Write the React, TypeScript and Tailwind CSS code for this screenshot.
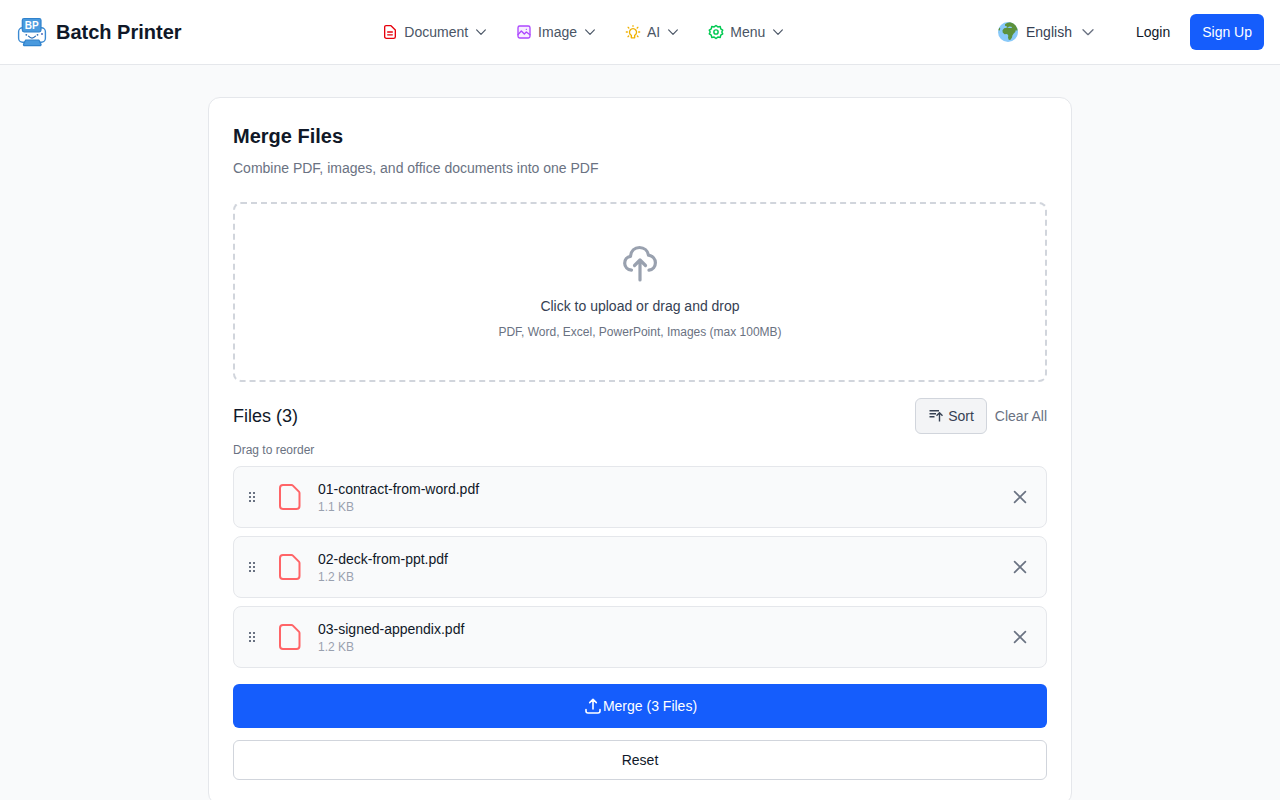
import type { ReactNode } from "react";

const files = [
  { name: "01-contract-from-word.pdf", size: "1.1 KB" },
  { name: "02-deck-from-ppt.pdf", size: "1.2 KB" },
  { name: "03-signed-appendix.pdf", size: "1.2 KB" },
];

function Logo() {
  return (
    <svg viewBox="0 0 32 32" className="size-8" aria-hidden="true">
      <rect x="2.6" y="11.8" width="26.8" height="14.400" rx="4" fill="#fff" stroke="#3b8ad2" strokeWidth="1.400" />
      <rect x="6.300" y="2.500" width="18.700" height="13.300" rx="1.800" fill="#4a9ade" stroke="#2f82cc" strokeWidth="1.200" />
      <text x="15.700" y="12.600" textAnchor="middle" fontSize="10" fontWeight="700" fill="#fff">
        BP
      </text>
      <path d="M12.500 20.200q3.500 3.800 7 0" fill="none" stroke="#2f6fb5" strokeWidth="1.200" strokeLinecap="round" />
      <circle cx="10.300" cy="18.800" r="0.900" fill="#2f6fb5" />
      <circle cx="21.500" cy="18.800" r="0.900" fill="#2f6fb5" />
      <circle cx="26" cy="18" r="0.900" fill="#3f5fb5" />
      <path d="M9.500 24.200h13.500l2 4q.3 1.400-1.200 1.400H8.700q-1.500 0-1.200-1.400z" fill="#4a9ade" stroke="#2f82cc" strokeWidth="1.200" strokeLinejoin="round" />
    </svg>
  );
}

function Stroke({ className, width = 2, children }: { className: string; width?: number; children: ReactNode }) {
  return (
    <svg
      viewBox="0 0 24 24"
      fill="none"
      stroke="currentColor"
      strokeWidth={width}
      strokeLinecap="round"
      strokeLinejoin="round"
      className={className}
      aria-hidden="true"
    >
      {children}
    </svg>
  );
}

function Chevron({ className }: { className: string }) {
  return (
    <Stroke className={className} width={2}>
      <path d="M4.500 8.500l7.500 7.500 7.500-7.500" />
    </Stroke>
  );
}

function Globe() {
  return (
    <svg viewBox="0 0 20 20" className="size-5" aria-hidden="true">
      <circle cx="10" cy="10" r="10" fill="#88c9f9" />
      <path
        d="M7 2.200l2-1.200 3-.800 3.400 1.200 2.400 2.300 1.600 3.200-.2 2.200-1.300-1.200-.7 2-1.500 1.700-1.300 1.900-.4 2.100-1.500 2.200-1.600.3-.9-2.300.3-2.200-1.200-1.500-2.600.2-1.800-1.800-.2-2.300 1.600-2 2.600-.400.300-1.300-2-.800z"
        fill="#5c913b"
      />
      <path d="M9 5.300l2 .800 2.600-.200.400-.900-2.200-.400-1.600.3z" fill="#88c9f9" />
      <path d="M.3 8.200l1-2.500.9.400-.400 2.300z" fill="#5c913b" />
    </svg>
  );
}

const menus = [
  {
    label: "Document",
    icon: (
      <Stroke className="size-4 text-red-600">
        <path d="M6 2.500h7.500l6.500 6.500V19a2.500 2.500 0 0 1-2.500 2.500H6.500A2.500 2.500 0 0 1 4 19V4.500a2 2 0 0 1 2-2z" />
        <path d="M8.500 12h7M8.500 16.200h7" />
      </Stroke>
    ),
  },
  {
    label: "Image",
    icon: (
      <Stroke className="size-4 text-purple-500">
        <rect x="3" y="3" width="18" height="18" rx="2.500" fill="currentColor" fillOpacity="0.100" />
        <path d="M3 16l5-5.500 4.500 4.500 3-3 5.500 4M15.500 8h.01" />
      </Stroke>
    ),
  },
  {
    label: "AI",
    icon: (
      <Stroke className="size-4 text-yellow-500">
        <path d="M9.500 17v3.800h5V17a5.300 5.300 0 1 0-5 0z" />
        <path d="M12 2.500v1M2 12h1.500M20.500 12H22M4.700 5l1 1M19.300 5l-1 1M5.500 18l-1 1M18.500 18l1 1" />
      </Stroke>
    ),
  },
  {
    label: "Menu",
    icon: (
      <Stroke className="size-4 text-green-500" width={2.2}>
        <path d="M12 2.200l2.800 2.200 3.600-.6.700 3.500 3 2L20.700 12l1.400 2.700-3 2-.7 3.500-3.600-.6L12 21.800l-2.800-2.200-3.600.6-.7-3.500-3-2L3.300 12 1.900 9.300l3-2 .7-3.500 3.600.6z" />
        <circle cx="12" cy="12" r="3.200" />
      </Stroke>
    ),
  },
];

function Header() {
  return (
    <header className="flex h-[65px] items-center justify-between border-b border-gray-200 bg-white px-4">
      <a href="#" className="flex items-center gap-2 text-xl font-bold text-gray-900">
        <Logo />
        Batch Printer
      </a>

      <nav className="flex items-center gap-1">
        {menus.map((menu) => (
          <button key={menu.label} type="button" className="flex items-center gap-1.5 px-3 py-2 text-gray-600">
            {menu.icon}
            {menu.label}
            <Chevron className="size-3.5" />
          </button>
        ))}
      </nav>

      <div className="flex items-center gap-4">
        <button type="button" className="flex items-center gap-2 px-3 py-2 text-gray-700">
          <Globe />
          English
          <Chevron className="size-4 text-gray-500" />
        </button>
        <div className="flex items-center gap-2">
          <a href="#login" className="px-3 py-2 text-gray-900">
            Login
          </a>
          <a href="#signup" className="rounded-md bg-blue-600 px-3 py-2 text-white">
            Sign Up
          </a>
        </div>
      </div>
    </header>
  );
}

function FileRow({ name, size }: { name: string; size: string }) {
  return (
    <li className="flex items-center rounded-lg border border-gray-200 bg-gray-50 p-3">
      <svg viewBox="0 0 12 16" className="mr-3 h-4 w-3 shrink-0 fill-gray-500" aria-hidden="true">
        {[4, 8, 12].map((y) => (
          <g key={y}>
            <rect x="3" y={y - 1} width="2" height="2" />
            <rect x="7" y={y - 1} width="2" height="2" />
          </g>
        ))}
      </svg>
      <div className="mr-2 flex w-10 shrink-0 justify-center">
        <svg viewBox="0 0 28 28" className="size-7 text-red-400" fill="none" stroke="currentColor" strokeWidth="2" strokeLinejoin="round" aria-hidden="true">
          <path d="M7 2h8.500q.8 0 1.400.6l6 6q.6.600.6 1.400V23a3 3 0 0 1-3 3H7a3 3 0 0 1-3-3V5a3 3 0 0 1 3-3z" />
        </svg>
      </div>
      <div className="min-w-0 flex-1">
        <p className="truncate text-gray-900">{name}</p>
        <p className="text-xs text-gray-400">{size}</p>
      </div>
      <button type="button" aria-label={`Remove ${name}`} className="p-1 text-gray-500">
        <Stroke className="size-5">
          <path d="M5.500 5.500l13 13M18.500 5.500l-13 13" />
        </Stroke>
      </button>
    </li>
  );
}

export default function App() {
  return (
    <div className="min-h-screen bg-gray-50 font-['Liberation_Sans',Arial,sans-serif] text-sm text-gray-900">
      <Header />

      <main className="mx-auto max-w-4xl px-4 py-8">
        <div className="rounded-xl border border-gray-200 bg-white p-6">
          <h1 className="text-xl font-bold">Merge Files</h1>
          <p className="mt-2 text-gray-500">Combine PDF, images, and office documents into one PDF</p>

          {/* Upload area */}
          <button type="button" className="mt-6 flex w-full flex-col items-center rounded-lg border-2 border-dashed border-gray-300 p-10">
            <svg viewBox="0 0 40 40" className="mb-3 size-10 text-gray-400" fill="none" stroke="currentColor" strokeWidth="3.200" strokeLinecap="round" strokeLinejoin="round" aria-hidden="true">
              <path d="M11.500 26.200C7.500 25.800 4.700 22.800 4.700 19.200c0-3.600 2.300-6.500 5.800-6.900C11 7.200 14.500 3.500 19.500 3.500c4.700 0 8.200 3.200 9 7.600 4.100.7 6.900 3.800 6.900 7.700 0 3.700-2.500 6.900-6.400 7.400" />
              <path d="M20 36V16.500M14.500 21.500L20 16l5.500 5.500" />
            </svg>
            <span className="mb-2 text-gray-700">Click to upload or drag and drop</span>
            <span className="text-xs text-gray-500">PDF, Word, Excel, PowerPoint, Images (max 100MB)</span>
          </button>

          {/* Selected files */}
          <div className="mt-4 flex items-center justify-between">
            <h2 className="text-lg">Files (3)</h2>
            <div className="flex items-center gap-2">
              <button type="button" className="flex h-9 items-center gap-1 rounded-md border border-gray-300 bg-gray-100 px-3 text-gray-700">
                <svg viewBox="0 0 16 16" className="size-4" fill="none" stroke="currentColor" strokeWidth="1.400" aria-hidden="true">
                  <path d="M1.500 2.700h9.500M1.500 5.700h6.500M1.500 8.700h5M11.500 13.500V4.500M8.500 7.700l3-3 3 3" />
                </svg>
                Sort
              </button>
              <button type="button" className="text-gray-500">
                Clear All
              </button>
            </div>
          </div>
          <p className="mt-2 text-xs text-gray-500">Drag to reorder</p>
          <ul className="mt-2 space-y-2">
            {files.map((file) => (
              <FileRow key={file.name} name={file.name} size={file.size} />
            ))}
          </ul>

          {/* Actions */}
          <button type="button" className="mt-4 flex h-11 w-full items-center justify-center rounded-md bg-blue-600 text-white">
            <svg viewBox="0 0 20 20" className="size-5" fill="none" stroke="currentColor" strokeWidth="1.600" strokeLinecap="round" strokeLinejoin="round" aria-hidden="true">
              <path d="M10 13V3.500M6.700 6.600L10 3.300l3.300 3.300M3 13.500v1.500a2 2 0 0 0 2 2h10a2 2 0 0 0 2-2v-1.500" />
            </svg>
            Merge (3 Files)
          </button>
          <button type="button" className="mt-3 h-10 w-full rounded-md border border-gray-300 bg-white">
            Reset
          </button>
        </div>
      </main>
    </div>
  );
}
